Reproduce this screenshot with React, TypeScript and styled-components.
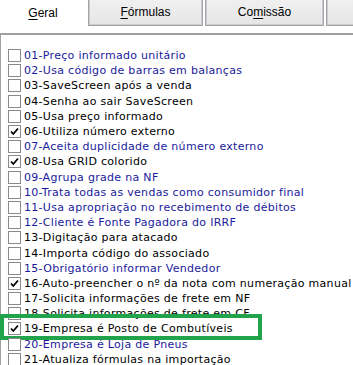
import type { FC } from 'react';
import styled, { createGlobalStyle } from 'styled-components';

const GlobalStyle = createGlobalStyle`
    html, body {
        margin: 0;
        padding: 0;
        background: #ffffff;
    }
`;

interface OptionItem {
    label: string;
    checked?: boolean;
    highlight?: boolean;
    blue?: boolean;
}

const options: OptionItem[] = [
    { label: '01-Preço informado unitário', blue: true },
    { label: '02-Usa código de barras em balanças', blue: true },
    { label: '03-SaveScreen após a venda' },
    { label: '04-Senha ao sair SaveScreen' },
    { label: '05-Usa preço informado' },
    { label: '06-Utiliza número externo', checked: true },
    { label: '07-Aceita duplicidade de número externo', blue: true },
    { label: '08-Usa GRID colorido', checked: true },
    { label: '09-Agrupa grade na NF', blue: true },
    { label: '10-Trata todas as vendas como consumidor final', blue: true },
    { label: '11-Usa apropriação no recebimento de débitos', blue: true },
    { label: '12-Cliente é Fonte Pagadora do IRRF', blue: true },
    { label: '13-Digitação para atacado' },
    { label: '14-Importa código do associado' },
    { label: '15-Obrigatório informar Vendedor', blue: true },
    { label: '16-Auto-preencher o nº da nota com numeração manual', checked: true },
    { label: '17-Solicita informações de frete em NF' },
    { label: '18-Solicita informações de frete em CF' },
    { label: '19-Empresa é Posto de Combutíveis', checked: true, highlight: true },
    { label: '20-Empresa é Loja de Pneus', blue: true },
    { label: '21-Atualiza fórmulas na importação' },
];

const Window = styled.div`
    width: 353px;
    height: 365px;
    overflow: hidden;
    background: #ffffff;
`;

const TabBar = styled.div`
    display: flex;
    height: 26px;
    font-family: 'Liberation Sans', Arial, sans-serif;
    font-size: 12px;
    color: #000000;
`;

const Tab = styled.div<{ $active?: boolean; $width: number }>`
    box-sizing: border-box;
    width: ${(p) => p.$width}px;
    flex-shrink: 0;
    display: flex;
    align-items: center;
    justify-content: center;
    margin-right: 2px;
    background: ${(p) => (p.$active ? '#ffffff' : 'linear-gradient(#f0f0f0, #e6e6e6)')};
    border: ${(p) => (p.$active ? 'none' : '1px solid #a3a3a3')};
    border-top: none;
    box-shadow: ${(p) => (p.$active ? 'none' : 'inset 1px 0 #c9ccd2, inset -1px 0 #c9ccd2, inset 0 -1px #c9ccd2')};
    padding-bottom: 1px;
`;

const Key = styled.span`
    text-decoration: underline;
    text-underline-offset: 2px;
`;

const Panel = styled.div`
    margin-top: 7px;
    border-top: 2px solid #a0a0a0;
    border-left: 1px solid #a0a0a0;
    padding: 13px 0 0 7px;
    display: flex;
    flex-direction: column;
    font-family: 'DejaVu Sans', Verdana, sans-serif;
    font-size: 11px;
    letter-spacing: 0.3px;
`;

const Row = styled.div<{ $blue?: boolean }>`
    position: relative;
    height: 15.2px;
    display: flex;
    align-items: center;
    gap: 3px;
    white-space: nowrap;
    color: ${(p) => (p.$blue ? '#1a1a9c' : '#000000')};
`;

const Box = styled.span`
    box-sizing: border-box;
    width: 13px;
    height: 13px;
    flex-shrink: 0;
    border: 1px solid #8a8a8a;
    background: #ffffff;
    display: flex;
    align-items: center;
    justify-content: center;
`;

const Highlight = styled.div`
    position: absolute;
    left: -8px;
    top: -7px;
    width: 262px;
    height: 26px;
    border: 4px solid #21a34b;
    box-sizing: border-box;
    pointer-events: none;
`;

const CheckMark: FC = () => (
    <svg width="11" height="11" viewBox="0 0 11 11">
        <polyline points="2,5.5 4.3,8 9,2.5" fill="none" stroke="#000" strokeWidth="1.8" />
    </svg>
);

const App: FC = () => (
    <Window>
        <GlobalStyle />
        <TabBar>
            <Tab $active $width={86}>
                <span>
                    <Key>G</Key>eral
                </span>
            </Tab>
            <Tab $width={115}>
                <span>
                    <Key>F</Key>órmulas
                </span>
            </Tab>
            <Tab $width={119}>
                <span>
                    Co<Key>m</Key>issão
                </span>
            </Tab>
            <Tab $width={60} />
        </TabBar>
        <Panel>
            {options.map((o) => (
                <Row key={o.label} $blue={o.blue}>
                    <Box>{o.checked && <CheckMark />}</Box>
                    <span>{o.label}</span>
                    {o.highlight && <Highlight />}
                </Row>
            ))}
        </Panel>
    </Window>
);

export default App;
